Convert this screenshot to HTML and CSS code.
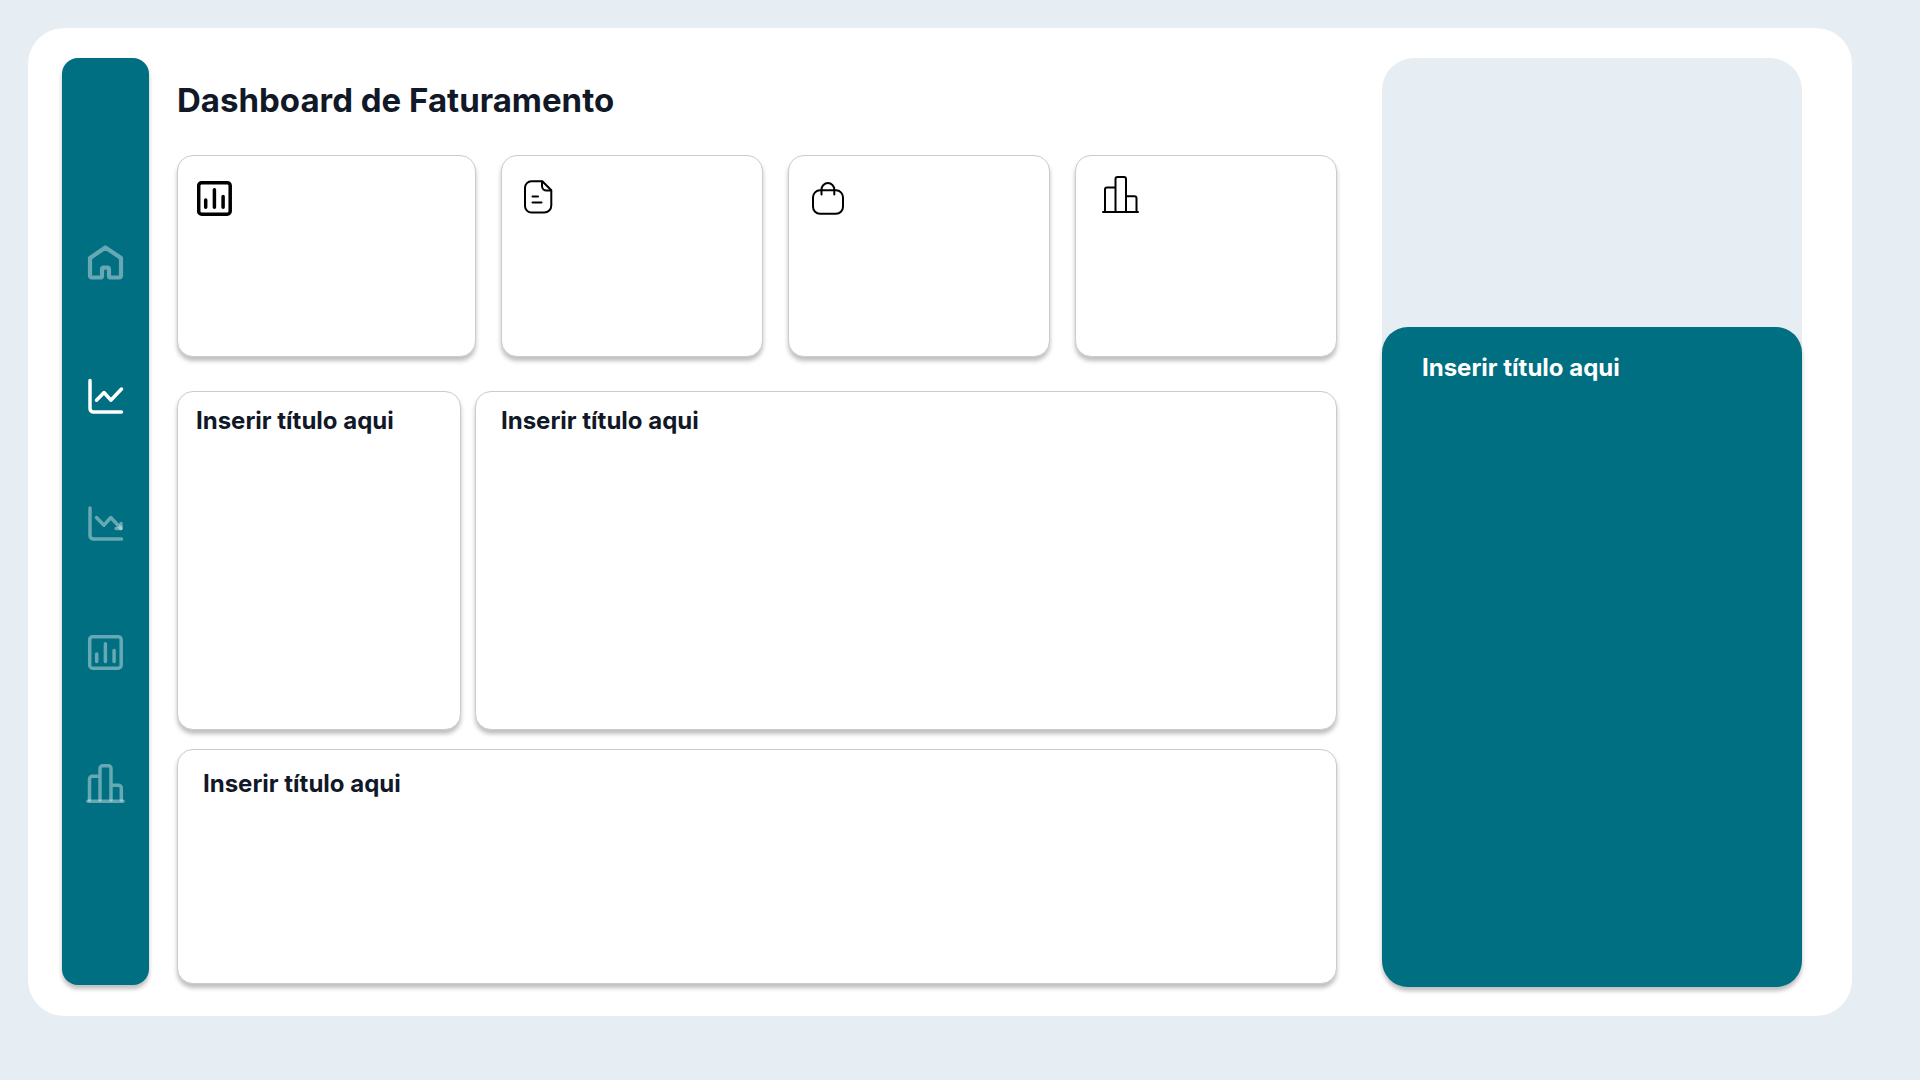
FILE: index.html
```html
<!DOCTYPE html>
<html lang="pt-BR">
<head>
    <meta charset="UTF-8">
    <meta name="viewport" content="width=device-width, initial-scale=1.0">
    <title>Dashboard de Faturamento</title>
    <link rel="stylesheet" href="styles.css">
</head>
<body>
    <div class="dashboard">
        <nav class="sidebar">
            <a href="#" aria-label="Início">
                <svg class="nav-icon" viewBox="0 0 39 40">
                    <path stroke-width="4.2" d="M4 14 19.400 3.500 35 14V31.700a1.800 1.800 0 0 1-1.800 1.800H24.800a1.800 1.800 0 0 1-1.800-1.800V25.500a1.800 1.800 0 0 0-1.800-1.800H17.800a1.800 1.800 0 0 0-1.800 1.800V31.700a1.800 1.800 0 0 1-1.800 1.800H5.800A1.800 1.800 0 0 1 4 31.700Z"/>
                </svg>
            </a>
            <a href="#" class="active" aria-label="Faturamento">
                <svg class="nav-icon" viewBox="0 0 39 40">
                    <path d="M4 6.500V34.500a3.500 3.500 0 0 0 3.500 3.500H35.500"/>
                    <path d="M10.500 26.200 18 18.500l6.800 7.700L35.500 15"/>
                </svg>
            </a>
            <a href="#" aria-label="Despesas">
                <svg class="nav-icon" viewBox="0 0 39 40">
                    <path d="M4 4V31.500a3.500 3.500 0 0 0 3.500 3.500H35.500"/>
                    <path d="M10.500 13.500 18 21.200l6.800-7.700L35 24.500"/>
                    <path d="M35 19.500V24.500H30"/>
                </svg>
            </a>
            <a href="#" aria-label="Relatórios">
                <svg class="nav-icon" viewBox="0 0 39 40">
                    <rect x="3.700" y="2.700" width="31.500" height="31.500" rx="3"/>
                    <path d="M10.700 20V27.500M19.400 9.800V27.500M28.100 16.600V27.500"/>
                </svg>
            </a>
            <a href="#" aria-label="Comparativo">
                <svg class="nav-icon" viewBox="0 0 39 40">
                    <path d="M3.500 36V15a2.800 2.800 0 0 1 2.800-2.800H14M14 36V4.500a2.800 2.800 0 0 1 2.800-2.800h5.400a2.800 2.800 0 0 1 2.800 2.800V36M25 21.200h7.500a2.800 2.800 0 0 1 2.800 2.800V36"/>
                    <path d="M2 37.200H37"/>
                </svg>
            </a>
        </nav>

        <main class="content">
            <h1>Dashboard de Faturamento</h1>

            <div class="cards">
                <div class="card">
                    <svg class="card-icon" viewBox="0 0 46 42">
                        <g stroke-width="3.500">
                            <rect x="1.700" y="7.700" width="31.500" height="31.500" rx="3"/>
                            <path d="M8.700 25V32.300M17.400 14.800V32.300M26.100 21.600V32.300"/>
                        </g>
                    </svg>
                </div>
                <div class="card">
                    <svg class="card-icon" viewBox="0 0 46 42">
                        <path d="M10.500 6.200H21.300L30.300 15.300V30.500a7 7 0 0 1-7 7H10.500a6.500 6.500 0 0 1-6.500-6.500V12.700a6.500 6.500 0 0 1 6.500-6.500Z"/>
                        <path d="M21 6.500V11a4.500 4.500 0 0 0 4.500 4.500H30M11.500 21.500H17M11.500 27.500H20.500"/>
                    </svg>
                </div>
                <div class="card">
                    <svg class="card-icon" viewBox="0 0 46 42">
                        <rect x="5" y="15.300" width="30" height="23.500" rx="7"/>
                        <path d="M13.500 19.500V14.500a6.400 6.400 0 0 1 12.800 0V19.500"/>
                    </svg>
                </div>
                <div class="card">
                    <svg class="card-icon" viewBox="0 0 46 42">
                        <path d="M10 37V14.500a2 2 0 0 1 2-2H20.500M20.500 37V4a2 2 0 0 1 2-2H29a2 2 0 0 1 2 2V37M31 21.200H39.500a2 2 0 0 1 2 2V37M8 37H43"/>
                    </svg>
                </div>
            </div>

            <div class="charts">
                <section class="card">
                    <h2>Inserir título aqui</h2>
                </section>
                <section class="card wide">
                    <h2>Inserir título aqui</h2>
                </section>
            </div>

            <section class="card footer-card">
                <h2>Inserir título aqui</h2>
            </section>
        </main>

        <aside class="side-panel">
            <section class="side-card">
                <h2>Inserir título aqui</h2>
            </section>
        </aside>
    </div>
</body>
</html>
```
FILE: styles.css
```css
* {
    box-sizing: border-box;
}

body {
    margin: 0;
    padding: 28px 68px 64px 28px;
    min-height: 100vh;
    display: flex;
    background-color: #e6edf3;
    font-family: Inter, "Liberation Sans", sans-serif;
    color: #111827;
}

h1, h2 {
    margin: 0;
    font-weight: 700;
}

h1 {
    font-size: 33px;
    line-height: 40px;
}

h2 {
    font-size: 24px;
    line-height: 34px;
}

.dashboard {
    flex: 1;
    display: flex;
    padding: 30px 50px 29px 34px;
    background-color: white;
    border-radius: 36px;
}

/* Sidebar */
.sidebar {
    flex: 0 0 87px;
    display: flex;
    flex-direction: column;
    margin-bottom: 2px;
    padding-top: 141px;
    background-color: #006f81;
    border-radius: 16px;
    box-shadow: 0 4px 4px rgba(0, 0, 0, 0.25);
}

.sidebar a {
    display: flex;
    align-items: center;
    justify-content: center;
    height: 130px;
    color: rgba(255, 255, 255, 0.4);
}

.sidebar a.active {
    color: white;
}

.nav-icon,
.card-icon {
    display: block;
    fill: none;
    stroke: currentColor;
    stroke-linecap: round;
    stroke-linejoin: round;
}

.nav-icon {
    width: 39px;
    height: 40px;
    stroke-width: 3.5;
}

.card-icon {
    width: 46px;
    height: 42px;
    color: black;
    stroke-width: 2;
}

/* Main area */
.content {
    flex: 1;
    display: flex;
    flex-direction: column;
    margin: 0 45px 3px 28px;
    padding-top: 22px;
}

.card {
    padding: 12px 18px;
    background-color: white;
    border: 1px solid #cccccc;
    border-radius: 16px;
    box-shadow: 0 4px 4px rgba(0, 0, 0, 0.25);
}

.cards {
    display: grid;
    grid-template-columns: 299fr 262fr 262fr 262fr;
    gap: 25px;
    margin-top: 35px;
}

.cards .card {
    min-height: 202px;
    padding: 19px;
}

.charts {
    flex: 1;
    display: grid;
    grid-template-columns: 284fr 862fr;
    gap: 14px;
    margin: 34px 0 19px;
}

.card.wide {
    padding-left: 25px;
}

.footer-card {
    min-height: 235px;
    padding: 17px 25px;
}

/* Right panel */
.side-panel {
    flex: 0 0 420px;
    display: flex;
    padding-top: 269px;
    background-color: #e6edf3;
    border-radius: 32px;
}

.side-card {
    flex: 1;
    padding: 24px 40px;
    background-color: #006f81;
    border-radius: 26px;
    box-shadow: 0 4px 4px rgba(0, 0, 0, 0.25);
    color: white;
}
```
